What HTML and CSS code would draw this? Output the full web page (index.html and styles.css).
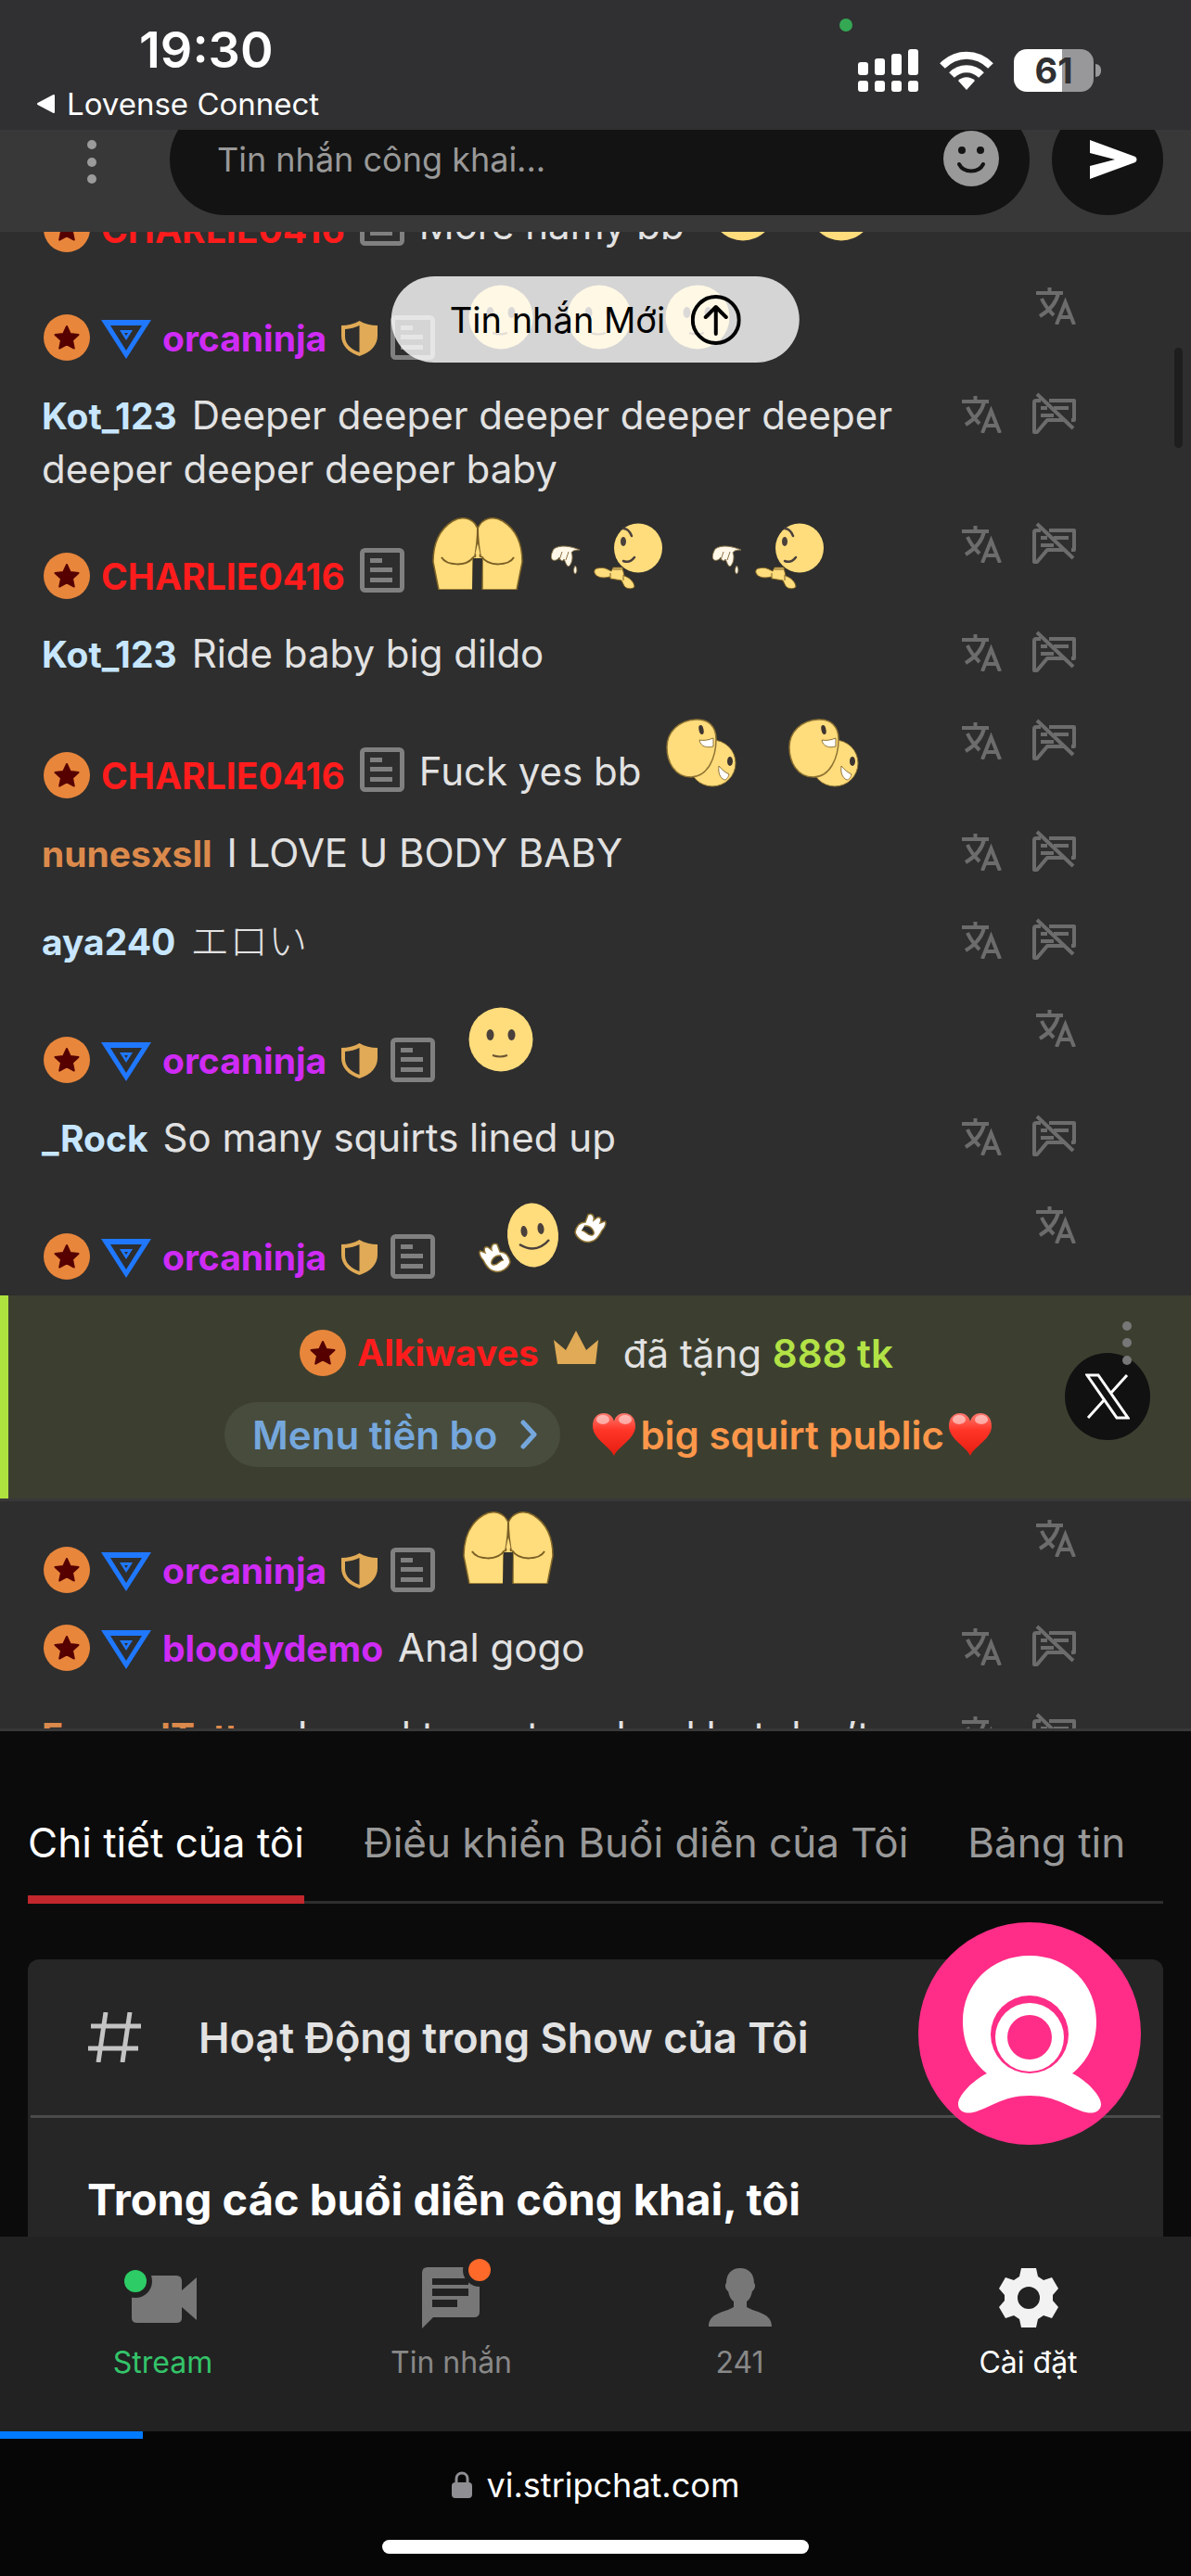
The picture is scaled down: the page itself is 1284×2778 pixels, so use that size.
FILE: index.html
```html
<!DOCTYPE html>
<html lang="vi">
  <head>
    <meta charset="UTF-8" />
    <meta name="viewport" content="width=device-width, initial-scale=1.0" />
    <title>vi.stripchat.com</title>
    <link rel="stylesheet" href="styles.css">
  </head>
  <body>
    <svg class="sprite" width="0" height="0" aria-hidden="true">
      <symbol id="level" viewBox="0 0 50 50">
        <circle cx="25" cy="25" r="25" fill="#e8863c" />
        <path d="M25 13l3.700 8 8.800 1-6.500 6 1.800 8.600L25 32.400l-7.800 4.200L19 28l-6.500-6 8.800-1z" fill="#560000" stroke="#560000" stroke-width="2" stroke-linejoin="round" />
      </symbol>
      <symbol id="diamond" viewBox="0 0 54 42">
        <path d="M0 0h54L27 42zM10 6l17 27L44 6z" fill="#1f78ff" fill-rule="evenodd" />
        <path d="M20 11h14l-7 11z" fill="#1f78ff" />
        <path d="M25 14h4l-2 3z" fill="#2e2e2e" />
      </symbol>
      <symbol id="shield" viewBox="0 0 39 38">
        <path d="M19.500 0C25 3.500 32 5 39 5v11c0 10-7 18-19.500 22C7 34 0 26 0 16V5c7 0 14-1.500 19.500-5zM19.500 5C15 7.500 9.500 8.500 4 9v8c0 7 5 13 15.500 17z" fill="#e0aa56" fill-rule="evenodd" />
      </symbol>
      <symbol id="note" viewBox="0 0 48 48">
        <rect x="2.500" y="2.500" width="43" height="43" rx="3" fill="none" stroke="#808080" stroke-width="5" />
        <path d="M11 11h13v5H11zM11 21h24v5H11zM11 32h24v5H11z" fill="#808080" />
      </symbol>
      <symbol id="translate" viewBox="0 0 44 40">
        <g fill="none" stroke="#6c6c6c" stroke-width="4">
          <path d="M0 6h29M14.500 0v6M24 6c-2 10-10 19-20 25M6 12c3 7 8 13 13 18" />
          <path d="M22 40l9.500-24 9.500 24M25.500 32h12" stroke-width="4" />
        </g>
      </symbol>
      <symbol id="mute" viewBox="0 0 48 46">
        <g fill="none" stroke="#6c6c6c" stroke-width="4" stroke-linejoin="round">
          <path d="M9 9H4a2 2 0 0 0-2 2v32l3 0 11-13h19M18 9h27v21h-3" />
          <path d="M5 2l39 37M9 17h7M23 17h16M9 25h14" />
        </g>
      </symbol>
      <symbol id="face" viewBox="0 0 70 80">
        <circle cx="35" cy="40" r="34.500" fill="#ffdc7c" />
        <ellipse cx="23.500" cy="35" rx="4" ry="6" fill="#4a403c" />
        <ellipse cx="46.500" cy="35" rx="4" ry="6" fill="#4a403c" />
        <path d="M26 57q8 3 16 0" fill="none" stroke="#6b5433" stroke-width="2" />
      </symbol>
      <symbol id="bottom" viewBox="0 0 98 78">
        <path d="M49 12C44 0 32-2 22 4 6 14 1 30 1 48l6 30h37V46h10v32h37l6-30c0-18-5-34-21-44C66-2 54 0 49 12z" fill="#ffdc7c" stroke="#806528" stroke-width="1.500" />
        <path d="M44 44l-1 34h10l1-34z" fill="#2e2e2e" />
        <path d="M49 12c0 14-1 20-3 31M49 12c0 14 1 20 3 31M10 43c5 9 27 11 35-1M88 43c-5 9-27 11-35-1" fill="none" stroke="#7a6026" stroke-width="2" />
        <path d="M49 28l2.500 11-2.500 3-2.500-3z" fill="#ffdc7c" />
      </symbol>
      <symbol id="splash" viewBox="0 0 120 80">
        <path d="M3 36c7-5 18-3 28 1-5 0-8 1-9 3 2 4 1 12-3 15-3-1-3-5-5-8-1 3-4 2-5-2-2 4-7 4-8 2-2-3 0-7 2-11z" fill="#fff8e8" stroke="#8a744a" stroke-width="1" />
        <path d="M12 39l-3 9M19 39l-3 9M26 54c3 3 2 8 0 9-2-2-2-5 0-9z" fill="#fff8e8" stroke="#8a744a" />
        <ellipse cx="94" cy="35" rx="26" ry="26.500" fill="#ffdc7c" />
        <ellipse cx="78" cy="28" rx="3" ry="5" fill="#4a403c" />
        <path d="M78 14c4 0 7 3 9 8M78 49c5 2 9 0 12-4" fill="none" stroke="#4a403c" stroke-width="2.500" stroke-linecap="round" />
        <path d="M50 57c7-2 11 1 15 3l2-4h10l2 9c6 2 11 7 11 12-3 3-9 2-11-1l-3-6-12-2-1-2c-6 2-14 1-16-4-1-3 1-5 3-5z" fill="#ffdc7c" stroke="#7a6026" />
        <path d="M67 58h10M64 62v6M78 64v6" fill="none" stroke="#7a6026" />
      </symbol>
      <symbol id="couple" viewBox="0 0 76 80">
        <circle cx="50" cy="52" r="25" fill="#ffdc7c" stroke="#8f7434" />
        <ellipse cx="69" cy="50" rx="3" ry="5" fill="#3c3430" />
        <path d="M57 55c3 4 7 7 11 9-1 4-3 6-5 6-5-2-7-8-6-15z" fill="#fff" stroke="#8f7434" />
        <path d="M32 5c14-1 22 8 22 21 0 20-9 41-27 41C9 67 1 50 1 35 1 18 14 6 32 5z" fill="#ffdc7c" stroke="#8f7434" stroke-width="1.500" />
        <ellipse cx="38" cy="16" rx="2.500" ry="5" transform="rotate(-12 38 16)" fill="#3c3430" />
        <path d="M36 27c5 1 10 0 15-2v9c-7 2-14 0-15-7z" fill="#fff" stroke="#8f7434" />
      </symbol>
      <symbol id="dance" viewBox="0 0 138 80">
        <ellipse cx="58.500" cy="39" rx="27.500" ry="34.500" transform="rotate(-4 58 39)" fill="#ffdc7c" />
        <ellipse cx="49" cy="35" rx="3.500" ry="6" transform="rotate(-8 49 35)" fill="#4a403c" />
        <ellipse cx="67" cy="32" rx="3.500" ry="6" transform="rotate(-8 67 32)" fill="#4a403c" />
        <path d="M44 49q18 11 32-5" fill="none" stroke="#4a403c" stroke-width="2.500" />
        <g fill="#fff" stroke="#8f7434" stroke-width="1.500">
          <path id="fist" d="M5 66C1 62 0 57 2 56l5 2c-2-5 0-7 3-6l4 3c-1-5 2-8 6-6l3 8c8 0 10 6 11 11-2 7-10 12-17 10C11 77 8 72 5 66zM24 61c-9-1-13 10-8 10 5 1 7-6 11-5" />
          <use href="#fist" transform="matrix(-1 0 0 1 138 -32)" />
        </g>
      </symbol>
      <symbol id="heart" viewBox="0 0 48 48">
        <path d="M24 47C20 37 1 29 1 15 1 6 6 1 13 1c6 0 10 4 11 9C25 5 29 1 35 1c7 0 12 5 12 14 0 14-19 22-23 32z" fill="url(#heart-fill)" />
        <ellipse cx="12" cy="8" rx="7" ry="5" fill="#fff" opacity=".5" />
        <ellipse cx="36" cy="8" rx="7" ry="5" fill="#fff" opacity=".5" />
      </symbol>
      <defs>
        <linearGradient id="heart-fill" x1="0" y1="0" x2="0" y2="1">
          <stop offset="0" stop-color="#ff7a70" />
          <stop offset=".4" stop-color="#ff3527" />
          <stop offset="1" stop-color="#e31d10" />
        </linearGradient>
      </defs>
    </svg>

    <header class="status-bar">
      <div class="status-left">
        <time class="clock">19:30</time>
        <a class="back-app" href="#">
          <svg width="22" height="22" viewBox="0 0 22 22"><path d="M20 2v18L3 11z" fill="#fff" stroke="#fff" stroke-width="2" stroke-linejoin="round" /></svg>
          Lovense Connect
        </a>
      </div>
      <i class="camera-dot"></i>
      <div class="status-icons">
        <svg width="66" height="46" viewBox="0 0 66 46" fill="#fff">
          <rect x="0" y="14" width="11" height="14" rx="3" />
          <rect x="18" y="10" width="11" height="18" rx="3" />
          <rect x="36" y="5" width="11" height="23" rx="3" />
          <rect x="54" y="0" width="11" height="28" rx="3" />
          <rect x="0" y="34" width="11" height="12" rx="3" />
          <rect x="18" y="34" width="11" height="12" rx="3" />
          <rect x="36" y="34" width="11" height="12" rx="3" />
          <rect x="54" y="34" width="11" height="12" rx="3" />
        </svg>
        <svg width="58" height="42" viewBox="0 0 58 42">
          <g fill="none" stroke="#fff" stroke-width="8">
            <path d="M3 16c15-15 37-15 52 0" />
            <path d="M13 26c9-9 23-9 32 0" />
          </g>
          <path d="M20 32c5-5 13-5 18 0l-9 10z" fill="#fff" />
        </svg>
        <div class="battery"><span>61</span></div>
      </div>
    </header>

    <form class="composer">
      <button class="dots" type="button" aria-label="Menu">
        <svg width="10" height="48" viewBox="0 0 10 48" fill="#9b9b9b"><circle cx="5" cy="5" r="5" /><circle cx="5" cy="24" r="5" /><circle cx="5" cy="42" r="5" /></svg>
      </button>
      <div class="composer-field">
        <input type="text" placeholder="Tin nhắn công khai..." aria-label="Tin nhắn công khai" />
        <button type="button" aria-label="Emoji">
          <svg width="60" height="60" viewBox="0 0 60 60">
            <circle cx="30" cy="30" r="30" fill="#999" />
            <circle cx="20" cy="21" r="4" fill="#131313" />
            <circle cx="40" cy="21" r="4" fill="#131313" />
            <path d="M17 36c5 10 21 10 26 0" fill="none" stroke="#131313" stroke-width="4" stroke-linecap="round" />
          </svg>
        </button>
      </div>
      <button class="send" type="submit" aria-label="Gửi">
        <svg width="52" height="44" viewBox="0 0 52 44"><path d="M1 1l49 18q3 3 0 6L1 43V29l27-7L1 15z" fill="#fff" /></svg>
      </button>
    </form>

    <main class="chat">
      <ul class="messages">
        <li class="message smiles">
          <p class="text">
            <svg class="level"><use href="#level" /></svg><b class="name red">CHARLIE0416</b><svg class="note"><use href="#note" /></svg><span class="line">More hamy bb</span><svg class="face near"><use href="#face" /></svg><svg class="face"><use href="#face" /></svg>
          </p>
        </li>
        <li class="message smiles">
          <p class="text">
            <svg class="level"><use href="#level" /></svg><svg class="diamond"><use href="#diamond" /></svg><b class="name pink">orcaninja</b><svg class="shield"><use href="#shield" /></svg><svg class="note low"><use href="#note" /></svg><svg class="face"><use href="#face" /></svg><svg class="face"><use href="#face" /></svg><svg class="face"><use href="#face" /></svg>
          </p>
          <div class="actions">
            <button aria-label="Dịch"><svg class="translate"><use href="#translate" /></svg></button>
          </div>
        </li>
        <li class="message">
          <p class="text"><b class="name blue">Kot_123</b><span class="line">Deeper deeper deeper deeper deeper deeper deeper deeper baby</span></p>
          <div class="actions">
            <button aria-label="Dịch"><svg class="translate"><use href="#translate" /></svg></button>
            <button aria-label="Tắt tiếng"><svg class="mute"><use href="#mute" /></svg></button>
          </div>
        </li>
        <li class="message smiles raised">
          <p class="text">
            <svg class="level"><use href="#level" /></svg><b class="name red">CHARLIE0416</b><svg class="note"><use href="#note" /></svg><svg class="bottom"><use href="#bottom" /></svg><svg class="splash"><use href="#splash" /></svg><svg class="splash wide"><use href="#splash" /></svg>
          </p>
          <div class="actions">
            <button aria-label="Dịch"><svg class="translate"><use href="#translate" /></svg></button>
            <button aria-label="Tắt tiếng"><svg class="mute"><use href="#mute" /></svg></button>
          </div>
        </li>
        <li class="message">
          <p class="text"><b class="name blue">Kot_123</b><span class="line">Ride baby big dildo</span></p>
          <div class="actions">
            <button aria-label="Dịch"><svg class="translate"><use href="#translate" /></svg></button>
            <button aria-label="Tắt tiếng"><svg class="mute"><use href="#mute" /></svg></button>
          </div>
        </li>
        <li class="message smiles">
          <p class="text">
            <svg class="level"><use href="#level" /></svg><b class="name red">CHARLIE0416</b><svg class="note"><use href="#note" /></svg><span class="line">Fuck yes bb</span><svg class="couple"><use href="#couple" /></svg><svg class="couple wide"><use href="#couple" /></svg>
          </p>
          <div class="actions">
            <button aria-label="Dịch"><svg class="translate"><use href="#translate" /></svg></button>
            <button aria-label="Tắt tiếng"><svg class="mute"><use href="#mute" /></svg></button>
          </div>
        </li>
        <li class="message">
          <p class="text"><b class="name orange">nunesxsll</b><span class="line">I LOVE U BODY BABY</span></p>
          <div class="actions">
            <button aria-label="Dịch"><svg class="translate"><use href="#translate" /></svg></button>
            <button aria-label="Tắt tiếng"><svg class="mute"><use href="#mute" /></svg></button>
          </div>
        </li>
        <li class="message">
          <p class="text"><b class="name blue">aya240</b><span class="line" lang="ja">エロい</span></p>
          <div class="actions">
            <button aria-label="Dịch"><svg class="translate"><use href="#translate" /></svg></button>
            <button aria-label="Tắt tiếng"><svg class="mute"><use href="#mute" /></svg></button>
          </div>
        </li>
        <li class="message smiles">
          <p class="text">
            <svg class="level"><use href="#level" /></svg><svg class="diamond"><use href="#diamond" /></svg><b class="name pink">orcaninja</b><svg class="shield"><use href="#shield" /></svg><svg class="note low"><use href="#note" /></svg><svg class="face"><use href="#face" /></svg>
          </p>
          <div class="actions">
            <button aria-label="Dịch"><svg class="translate"><use href="#translate" /></svg></button>
          </div>
        </li>
        <li class="message">
          <p class="text"><b class="name blue">_Rock</b><span class="line">So many squirts lined up</span></p>
          <div class="actions">
            <button aria-label="Dịch"><svg class="translate"><use href="#translate" /></svg></button>
            <button aria-label="Tắt tiếng"><svg class="mute"><use href="#mute" /></svg></button>
          </div>
        </li>
        <li class="message smiles">
          <p class="text">
            <svg class="level"><use href="#level" /></svg><svg class="diamond"><use href="#diamond" /></svg><b class="name pink">orcaninja</b><svg class="shield"><use href="#shield" /></svg><svg class="note low"><use href="#note" /></svg><svg class="dance"><use href="#dance" /></svg>
          </p>
          <div class="actions">
            <button aria-label="Dịch"><svg class="translate"><use href="#translate" /></svg></button>
          </div>
        </li>
        <li class="tip">
          <p class="tip-row">
            <svg class="level"><use href="#level" /></svg><b class="name red">Alkiwaves</b>
            <svg class="crown" viewBox="0 0 48 36"><path d="M0 10l13 11L24 0l11 21 13-11-3 26H4z" fill="#e0aa56" /></svg>
            <span class="gave">đã tặng <b>888 tk</b></span>
          </p>
          <p class="tip-row">
            <a class="tip-menu" href="#">Menu tiền bo <svg width="20" height="32" viewBox="0 0 20 32"><path d="M4 3l12 13L4 29" fill="none" stroke="#75a7dc" stroke-width="5" stroke-linecap="round" stroke-linejoin="round" /></svg></a>
            <span class="tip-name"><svg class="heart"><use href="#heart" /></svg>big squirt public<svg class="heart"><use href="#heart" /></svg></span>
          </p>
          <a class="share" href="#" aria-label="X">
            <svg width="48" height="50" viewBox="0 0 48 50"><path d="M2 2h12l32 46H34zM45 2L27 22M3 48l18-20" fill="none" stroke="#fff" stroke-width="3" /></svg>
          </a>
          <button class="tip-dots" aria-label="Menu">
            <svg width="10" height="47" viewBox="0 0 10 47" fill="#777"><circle cx="5" cy="5" r="5" /><circle cx="5" cy="23" r="5" /><circle cx="5" cy="42" r="5" /></svg>
          </button>
        </li>
        <li class="message smiles raised">
          <p class="text">
            <svg class="level"><use href="#level" /></svg><svg class="diamond"><use href="#diamond" /></svg><b class="name pink">orcaninja</b><svg class="shield"><use href="#shield" /></svg><svg class="note low"><use href="#note" /></svg><svg class="bottom"><use href="#bottom" /></svg>
          </p>
          <div class="actions">
            <button aria-label="Dịch"><svg class="translate"><use href="#translate" /></svg></button>
          </div>
        </li>
        <li class="message">
          <p class="text"><svg class="level"><use href="#level" /></svg><svg class="diamond"><use href="#diamond" /></svg><b class="name pink">bloodydemo</b><span class="line">Anal gogo</span></p>
          <div class="actions">
            <button aria-label="Dịch"><svg class="translate"><use href="#translate" /></svg></button>
            <button aria-label="Tắt tiếng"><svg class="mute"><use href="#mute" /></svg></button>
          </div>
        </li>
        <li class="message">
          <p class="text"><b class="name orange">FoxandTattoo</b><span class="line">I need to go to school but don’t</span></p>
          <div class="actions">
            <button aria-label="Dịch"><svg class="translate"><use href="#translate" /></svg></button>
            <button aria-label="Tắt tiếng"><svg class="mute"><use href="#mute" /></svg></button>
          </div>
        </li>
      </ul>
      <button class="new-messages">
        Tin nhắn Mới
        <svg width="54" height="54" viewBox="0 0 54 54" fill="none" stroke="#000" stroke-width="4"><circle cx="27" cy="27" r="25" /><path d="M27 42V14M16 24l11-11 11 11" stroke-linecap="round" stroke-linejoin="round" /></svg>
      </button>
      <i class="scroll-thumb"></i>
    </main>

    <section class="details">
      <nav class="tabs">
        <a class="active" href="#">Chi tiết của tôi</a>
        <a href="#">Điều khiển Buổi diễn của Tôi</a>
        <a href="#">Bảng tin</a>
      </nav>
      <div class="card">
        <div class="card-head">
          <svg width="60" height="54" viewBox="0 0 60 54" fill="none" stroke="#c4c4c4" stroke-width="5"><path d="M4 15h54M1 39h54M20 0l-8 54M46 0l-8 54" /></svg>
          <h2>Hoạt Động trong Show của Tôi</h2>
        </div>
        <h3>Trong các buổi diễn công khai, tôi</h3>
      </div>
      <button class="webcam" aria-label="Webcam">
        <svg viewBox="0 0 240 240">
          <circle cx="120" cy="120" r="120" fill="#ff2d87" />
          <path d="M120 36c42 0 72 31 72 71 0 26-11 44-26 56 16 8 31 24 31 33 0 8-8 11-16 9-18-4-31-18-61-18s-43 14-61 18c-8 2-16-1-16-9 0-9 15-25 31-33-15-12-26-30-26-56 0-40 30-71 72-71z" fill="#fff" />
          <circle cx="120" cy="121" r="42" fill="#ff2d87" />
          <circle cx="120" cy="124" r="37" fill="#fff" />
          <circle cx="120" cy="124" r="24" fill="#ff2d87" />
        </svg>
      </button>
    </section>

    <nav class="bottom-nav">
      <a class="stream" href="#">
        <svg width="84" height="84" viewBox="2 0 84 84">
          <path d="M10 18h48q6 0 6 6v10l16-14v46L64 52v12q0 5-6 5H16q-6 0-6-5z" fill="#777" />
          <circle cx="14" cy="24" r="18" fill="#222" />
          <circle cx="14" cy="24" r="12" fill="#2dcc66" />
        </svg>
        Stream
      </a>
      <a href="#">
        <svg width="84" height="84" viewBox="-8 0 84 84">
          <path d="M8 9h50q6 0 6 6v42q0 6-6 6H14L2 75V15q0-6 6-6z" fill="#777" />
          <path d="M13 21h39v7H13zM13 32h39v8H13zM13 44h27v8H13z" fill="#222" />
          <path d="M13 28h39v4H13z" fill="#777" />
          <circle cx="64" cy="12" r="18" fill="#222" />
          <circle cx="64" cy="12" r="12" fill="#ff692a" />
        </svg>
        Tin nhắn
      </a>
      <a href="#">
        <svg width="68" height="64" viewBox="0 0 68 64"><path d="M34 0c9 0 15 6 15 16 2 2 1 7-2 9-1 5-3 9-6 11v6c10 6 27 6 27 21H0c0-15 17-15 27-21v-6c-3-2-5-6-6-11-3-2-4-7-2-9C19 6 25 0 34 0z" fill="#777" /></svg>
        241
      </a>
      <a class="current" href="#">
        <svg width="64" height="64" viewBox="0 0 64 64"><path d="M24 0h16l2 9 6 4 9-3 7 12-6 7v6l6 7-7 12-9-3-6 4-2 9H24l-2-9-6-4-9 3-7-12 6-7v-6l-6-7 7-12 9 3 6-4zM32 20a12 12 0 1 0 0 24 12 12 0 0 0 0-24z" fill="#f2f2f2" fill-rule="evenodd" /></svg>
        Cài đặt
      </a>
    </nav>

    <footer class="browser-bar">
      <i class="progress"></i>
      <div class="address">
        <svg width="22" height="30" viewBox="0 0 22 30"><rect y="12" width="22" height="17" rx="4" fill="#8e8e93" /><path d="M5 14V8c0-8 12-8 12 0v6" fill="none" stroke="#8e8e93" stroke-width="3" /></svg>
        vi.stripchat.com
      </div>
      <i class="home-bar"></i>
    </footer>
  </body>
</html>
```
FILE: styles.css
```css
* {
  box-sizing: border-box;
  margin: 0;
  padding: 0;
}
body {
  display: flex;
  flex-direction: column;
  height: 100vh;
  overflow: hidden;
  background: #0b0b0b;
  color: #e2e2e2;
  font-family: Inter, 'Noto Sans CJK JP', sans-serif;
}
button {
  display: block;
  border: 0;
  background: none;
  font-family: inherit;
}
a {
  color: inherit;
  text-decoration: none;
}
ul {
  list-style: none;
}
.sprite {
  position: absolute;
}

/* status bar */
.status-bar {
  position: relative;
  flex: none;
  display: flex;
  justify-content: space-between;
  height: 140px;
  padding: 20px 105px 0 38px;
  background: #303032;
  color: #fff;
}
.clock {
  display: block;
  margin-left: 112px;
  font-size: 54px;
  line-height: 68px;
  font-weight: 600;
}
.back-app {
  display: flex;
  align-items: center;
  gap: 12px;
  font-size: 33px;
  line-height: 48px;
}
.camera-dot {
  position: absolute;
  top: 20px;
  right: 365px;
  width: 14px;
  height: 14px;
  border-radius: 50%;
  background: #34a853;
}
.status-icons {
  display: flex;
  align-items: center;
  gap: 22px;
  height: 46px;
  margin-top: 33px;
}
.battery {
  position: relative;
  width: 86px;
  height: 46px;
  border-radius: 14px;
  background: linear-gradient(90deg, #fff 61%, #98989a 61%);
  color: #303032;
  font-size: 38px;
  line-height: 46px;
  font-weight: 700;
  text-align: center;
}
.battery::after {
  content: '';
  position: absolute;
  right: -8px;
  top: 16px;
  width: 6px;
  height: 14px;
  border-radius: 0 6px 6px 0;
  background: #98989a;
}

/* composer, partly under the status bar */
.composer {
  flex: none;
  display: flex;
  align-items: flex-end;
  gap: 24px;
  height: 110px;
  padding: 0 30px 18px 94px;
  overflow: hidden;
  background: #383838;
}
.dots {
  margin: 0 55px 30px 0;
}
.composer-field {
  flex: 1;
  display: flex;
  align-items: center;
  height: 120px;
  padding: 0 33px 0 51px;
  border-radius: 60px;
  background: #131313;
}
.composer-field input {
  flex: 1;
  border: 0;
  outline: 0;
  background: none;
  color: #fff;
  font-family: inherit;
  font-size: 36px;
}
.composer-field input::placeholder {
  color: #999;
}
.send {
  display: flex;
  align-items: center;
  justify-content: center;
  width: 120px;
  height: 120px;
  padding-left: 12px;
  border-radius: 50%;
  background: #131313;
}

/* chat */
.chat {
  position: relative;
  flex: 1;
  min-height: 0;
  overflow: hidden;
  border-bottom: 3px solid #383838;
  background: #2e2e2e;
}
.messages {
  margin-top: -83px;
}
.message {
  display: flex;
  justify-content: space-between;
  gap: 32px;
  padding: 18px 123px 19px 45px;
}
.message.smiles {
  padding-bottom: 8px;
}
.text {
  flex: 1;
  font-size: 42px;
  line-height: 58px;
}
.text svg {
  display: inline-block;
}
.name {
  font-size: 39px;
  line-height: 38px;
  font-weight: 700;
}
.red {
  color: #ff1c1c;
}
.pink {
  color: #cf2bf5;
}
.blue {
  color: #c7e6ff;
}
.orange {
  color: #dc8a4c;
}
.line {
  margin-left: 16px;
}
.smiles .line {
  line-height: 38px;
  vertical-align: 4px;
}
.line:lang(ja) {
  font-weight: 300;
}
.level {
  width: 50px;
  height: 50px;
  margin: 0 12px 0 2px;
  vertical-align: -10px;
}
.diamond {
  width: 54px;
  height: 42px;
  margin-right: 12px;
  vertical-align: -8px;
}
.shield {
  width: 39px;
  height: 38px;
  margin-left: 16px;
  vertical-align: -5px;
}
.note {
  width: 48px;
  height: 48px;
  margin-left: 16px;
  vertical-align: -3px;
}
.note.low {
  margin-left: 14px;
  vertical-align: -9px;
}
.face {
  width: 70px;
  height: 80px;
  margin-left: 36px;
  vertical-align: -3px;
}
.face.near {
  margin-left: 28px;
}
.bottom {
  width: 98px;
  height: 78px;
  margin: -14px 0 0 30px;
}
.splash {
  width: 120px;
  height: 80px;
  margin: -16px 0 0 30px;
}
.splash.wide {
  margin-left: 54px;
}
.couple {
  width: 76px;
  height: 80px;
  margin-left: 26px;
}
.couple.wide {
  margin-left: 56px;
}
.dance {
  width: 138px;
  height: 80px;
  margin-left: 47px;
  vertical-align: -3px;
}
.actions {
  display: flex;
  align-items: flex-start;
  gap: 32px;
  padding-top: 4px;
}
.raised .actions {
  margin-top: -13px;
}
.actions svg {
  display: block;
}
.translate {
  width: 44px;
  height: 40px;
  margin-top: 4px;
}
.mute {
  width: 48px;
  height: 46px;
}

/* tip */
.tip {
  position: relative;
  display: flex;
  flex-direction: column;
  gap: 18px;
  height: 222px;
  margin: 5px 0 7px;
  padding: 27px 0 0;
  border-bottom: 3px solid #383838;
  background: linear-gradient(90deg, #aee23f 9px, #3c3f30 9px);
}
.tip-row {
  display: flex;
  align-items: center;
  justify-content: center;
  height: 70px;
}
.crown {
  width: 48px;
  height: 36px;
  margin: -12px 0 0 16px;
}
.gave {
  margin: 0 0 0 27px;
  font-size: 42px;
}
.gave b {
  font-weight: 600;
  color: #b2e246;
}
.tip-menu {
  display: flex;
  align-items: center;
  gap: 24px;
  height: 70px;
  margin-left: 28px;
  padding: 0 24px 0 30px;
  border-radius: 35px;
  background: #484c3d;
  color: #75a7dc;
  font-size: 42px;
  font-weight: 600;
}
.tip-name {
  display: flex;
  align-items: center;
  gap: 4px;
  margin-left: 34px;
  color: #ff974b;
  font-size: 42px;
  font-weight: 600;
}
.heart {
  width: 48px;
  height: 48px;
}
.share {
  position: absolute;
  right: 44px;
  top: 62px;
  display: flex;
  align-items: center;
  justify-content: center;
  width: 92px;
  height: 94px;
  border-radius: 50%;
  background: #111;
}
.tip-dots {
  position: absolute;
  right: 64px;
  top: 28px;
}
.new-messages {
  position: absolute;
  top: 48px;
  left: 50%;
  transform: translateX(-50%);
  display: flex;
  align-items: center;
  gap: 28px;
  height: 93px;
  padding: 0 63px;
  border-radius: 47px;
  background: rgba(255, 255, 255, 0.8);
  color: #000;
  font-size: 38px;
  white-space: nowrap;
}
.scroll-thumb {
  position: absolute;
  top: 125px;
  right: 9px;
  width: 9px;
  height: 108px;
  border-radius: 5px;
  background: #1e1e1e;
}

/* details */
.details {
  position: relative;
  flex: none;
  height: 545px;
  padding: 0 30px;
  overflow: hidden;
}
.tabs {
  display: flex;
  gap: 64px;
  height: 186px;
  padding-top: 84px;
  border-bottom: 3px solid #2e2e2e;
  color: #999;
  font-size: 44px;
  line-height: 72px;
  white-space: nowrap;
}
.tabs .active {
  height: 102px;
  border-bottom: 9px solid #c1272d;
  color: #fff;
}
.card {
  margin-top: 60px;
  padding: 0 3px;
  border-radius: 12px 12px 0 0;
  background: #262626;
}
.card-head {
  display: flex;
  align-items: center;
  gap: 60px;
  height: 171px;
  padding-left: 61px;
  border-bottom: 3px solid #4a4a4a;
}
.card h2 {
  font-size: 45px;
  font-weight: 600;
}
.card h3 {
  padding: 52px 61px;
  color: #fff;
  font-size: 47px;
  line-height: 72px;
  font-weight: 700;
}
.webcam {
  position: absolute;
  top: 206px;
  right: 54px;
  width: 240px;
  height: 240px;
}

/* bottom navigation */
.bottom-nav {
  flex: none;
  display: grid;
  grid-template-columns: repeat(4, 1fr);
  height: 210px;
  padding: 24px 20px 0;
  background: #222;
  color: #888;
  font-size: 32px;
  line-height: 40px;
}
.bottom-nav a {
  display: grid;
  grid-template-rows: 84px 40px;
  gap: 8px;
  align-content: start;
  align-items: center;
  justify-items: center;
}
.bottom-nav .stream {
  color: #34c46a;
}
.bottom-nav .current {
  color: #fff;
}

/* browser */
.browser-bar {
  position: relative;
  flex: none;
  display: flex;
  flex-direction: column;
  align-items: center;
  justify-content: space-between;
  height: 156px;
  padding: 36px 0 24px;
  background: #060606;
  color: #fff;
}
.progress {
  position: absolute;
  top: 0;
  left: 0;
  width: 12%;
  height: 8px;
  background: #007aff;
}
.address {
  display: flex;
  align-items: center;
  gap: 16px;
  font-size: 36px;
  line-height: 44px;
}
.home-bar {
  width: 460px;
  height: 15px;
  border-radius: 8px;
  background: #fff;
}
```
